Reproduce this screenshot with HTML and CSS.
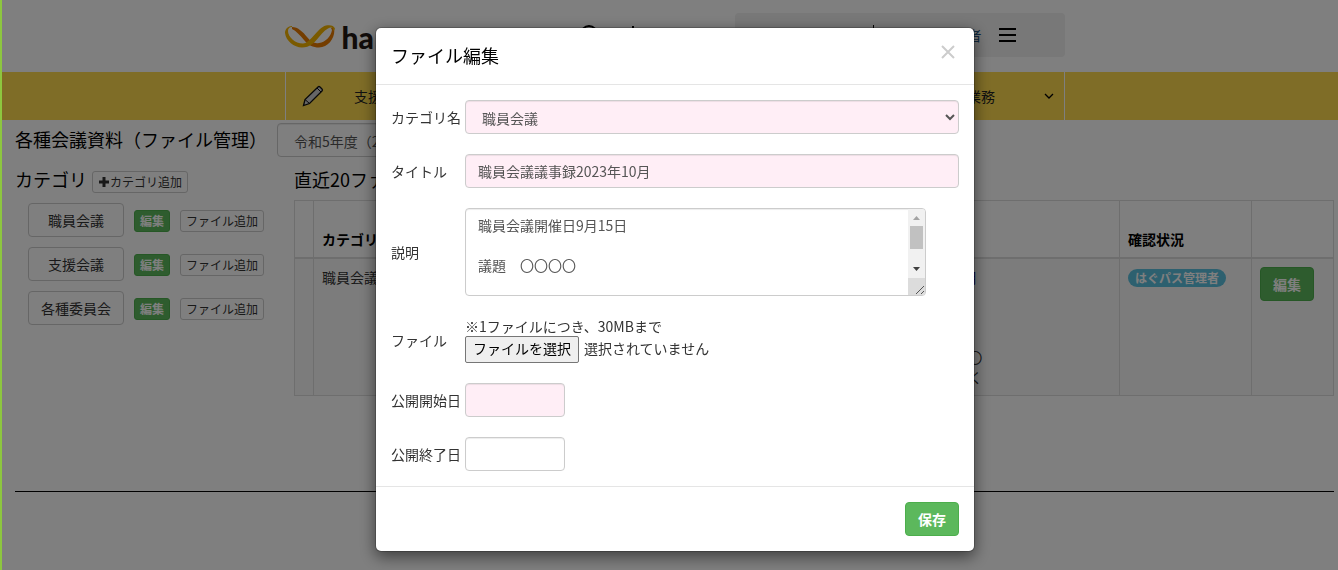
FILE: index.html
```html
<!DOCTYPE html>
<html lang="ja">
<head>
    <meta charset="UTF-8">
    <meta name="viewport" content="width=device-width, initial-scale=1.0">
    <title>各種会議資料（ファイル管理）</title>
    <link rel="stylesheet" href="styles.css">
</head>
<body>
    <header class="site-header">
        <div class="header-inner">
            <a href="#" class="logo">
                <svg width="50" height="24" viewBox="0 0 50 24" aria-hidden="true">
                    <path d="M7 2C13 2 18 7 22 12C26 17 30 19 34 18C41 17 46 11 47 5L46 3L49 2C51 12 44 22 34 22.500C28 22.500 23 20 19 15C15 10 11 6 7 4Z" fill="#e87a00"/>
                    <path d="M7 1C3 1 0 4 0 8C1 16 9 22.500 17 22.500C25 22.500 29 18 34 12C38 7 42 3 46 2.500C48 2.500 48 4 48 6L50 4C49 0 45 0 41 0.500C32 3 26 18 18 18.500C10 18.500 3 12 3 6C3 4 4 2 7 2Z" fill="#f5b400"/>
                </svg>
                <span>ha</span>
            </a>
            <div class="header-help">
                <svg width="60" height="20" viewBox="0 0 60 20" aria-hidden="true">
                    <circle cx="9" cy="9" r="8" fill="none" stroke="#000" stroke-width="2"/>
                    <path d="M53 1v14" stroke="#000" stroke-width="2"/>
                </svg>
            </div>
            <div class="user-box">
                <span class="user-divider"></span>
                <a href="#" class="user-name">管理者</a>
                <button type="button" class="menu-button" aria-label="メニュー"><span></span><span></span><span></span></button>
            </div>
        </div>
    </header>

    <nav class="navbar">
        <ul class="nav-list">
            <li>
                <a href="#">
                    <svg class="nav-icon" width="22" height="22" viewBox="0 0 22 22" aria-hidden="true">
                        <path d="M1.500 20.500L3 14.500L16 2Q17 1 18 2L20 4Q21 5 20 6L7.500 18.500Z" fill="#ccc" stroke="#111" stroke-width="1.300"/>
                        <path d="M3 14.500L7.500 18.500M15 3L19 7" stroke="#111"/>
                    </svg>
                    支援
                </a>
            </li>
            <li>
                <a href="#">
                    <span class="nav-icon"></span>
                    管理業務
                    <svg class="nav-arrow" width="10" height="6" viewBox="0 0 10 6" aria-hidden="true"><path d="M1 1l4 4 4-4" fill="none" stroke="#000" stroke-width="1.300"/></svg>
                </a>
            </li>
        </ul>
    </nav>

    <main class="page">
        <div class="title-row">
            <h1>各種会議資料（ファイル管理）</h1>
            <select class="form-control year-select" aria-label="年度">
                <option>令和5年度（2023年度）</option>
            </select>
        </div>

        <div class="columns">
            <section class="category-area">
                <div class="area-heading">
                    <h2>カテゴリ</h2>
                    <button type="button" class="btn btn-xs">
                        <svg width="12" height="12" viewBox="0 0 12 12" aria-hidden="true"><path d="M6 1v10M1 6h10" stroke="#333" stroke-width="3"/></svg>カテゴリ追加
                    </button>
                </div>
                <ul class="category-list">
                    <li>
                        <button type="button" class="btn category-name">職員会議</button>
                        <button type="button" class="btn btn-xs btn-success">編集</button>
                        <button type="button" class="btn btn-xs">ファイル追加</button>
                    </li>
                    <li>
                        <button type="button" class="btn category-name">支援会議</button>
                        <button type="button" class="btn btn-xs btn-success">編集</button>
                        <button type="button" class="btn btn-xs">ファイル追加</button>
                    </li>
                    <li>
                        <button type="button" class="btn category-name">各種委員会</button>
                        <button type="button" class="btn btn-xs btn-success">編集</button>
                        <button type="button" class="btn btn-xs">ファイル追加</button>
                    </li>
                </ul>
            </section>

            <section class="file-area">
                <div class="area-heading">
                    <h2>直近20ファイル</h2>
                </div>
                <table class="file-table">
                    <thead>
                        <tr>
                            <th class="col-mark"></th>
                            <th>カテゴリ</th>
                            <th class="col-detail"></th>
                            <th class="col-status">確認状況</th>
                            <th class="col-edit"></th>
                        </tr>
                    </thead>
                    <tbody>
                        <tr>
                            <td></td>
                            <td>職員会議</td>
                            <td>
                                <a href="#">職員会議議事録2023年10月</a>
                                <p class="detail-text">9月15日　議題　〇〇〇〇〇<br>9月15日　会議資料を詳しく</p>
                            </td>
                            <td><span class="badge">はぐパス管理者</span></td>
                            <td><button type="button" class="btn btn-success">編集</button></td>
                        </tr>
                    </tbody>
                </table>
            </section>
        </div>

        <hr>
    </main>

    <div class="modal-backdrop">
        <div class="modal" role="dialog" aria-modal="true" aria-labelledby="modal-title">
            <div class="modal-header">
                <h2 id="modal-title">ファイル編集</h2>
                <button type="button" class="close" aria-label="閉じる">
                    <svg width="14" height="14" viewBox="0 0 14 14" aria-hidden="true"><path d="M1 1l12 12M13 1L1 13" stroke="#ccc" stroke-width="2"/></svg>
                </button>
            </div>
            <form>
                <div class="modal-body">
                    <div class="form-row">
                        <label for="category">カテゴリ名</label>
                        <select id="category" class="form-control required">
                            <option>職員会議</option>
                        </select>
                    </div>
                    <div class="form-row">
                        <label for="title">タイトル</label>
                        <input type="text" id="title" class="form-control required" value="職員会議議事録2023年10月">
                    </div>
                    <div class="form-row">
                        <label for="description">説明</label>
                        <div class="textarea-wrap">
                            <textarea id="description" class="form-control">職員会議開催日9月15日

議題　〇〇〇〇


</textarea>
                            <svg class="scrollbar" width="17" height="86" viewBox="0 0 17 86" aria-hidden="true">
                                <path d="M0 0H14Q17 0 17 3V69H0Z" fill="#f1f1f1"/>
                                <path d="M5 11L8.500 7L12 11Z" fill="#a3a3a3"/>
                                <path d="M2 17H15V40H2Z" fill="#c1c1c1"/>
                                <path d="M5 58L8.500 62L12 58Z" fill="#404040"/>
                                <path d="M0 69H17V83Q17 86 14 86H0Z" fill="#dcdcdc"/>
                                <path d="M8 85L16 77M13 85L16 82" stroke="#555"/>
                            </svg>
                        </div>
                    </div>
                    <div class="form-row">
                        <label for="file">ファイル</label>
                        <div class="file-field">
                            <p>※1ファイルにつき、30MBまで</p>
                            <div class="file-picker">
                                <input type="file" id="file">
                                <label for="file" class="file-button">ファイルを選択</label>
                                <span>選択されていません</span>
                            </div>
                        </div>
                    </div>
                    <div class="form-row">
                        <label for="start-date">公開開始日</label>
                        <input type="text" id="start-date" class="form-control date required">
                    </div>
                    <div class="form-row">
                        <label for="end-date">公開終了日</label>
                        <input type="text" id="end-date" class="form-control date">
                    </div>
                </div>
                <div class="modal-footer">
                    <button type="submit" class="btn btn-success">保存</button>
                </div>
            </form>
        </div>
    </div>
</body>
</html>
```

FILE: styles.css
```css
* {
    box-sizing: border-box;
}

body {
    margin: 0;
    font-family: "Noto Sans CJK JP", sans-serif;
    font-size: 14px;
    line-height: 20px;
    color: #333;
    background: #fff;
    overflow: hidden;
}

/* green line on the left edge, stays above the backdrop */
body::before {
    content: "";
    position: fixed;
    top: 0;
    bottom: 0;
    left: 0;
    width: 2px;
    background: #8dc63f;
    z-index: 20;
}

h1, h2 {
    margin: 0;
    font-size: 18px;
    line-height: 26px;
    font-weight: 400;
    color: #000;
}

p {
    margin: 0;
}

ul {
    list-style: none;
    margin: 0;
    padding: 0;
}

a {
    color: #337ab7;
    text-decoration: none;
}

button, input, select, textarea {
    font-family: inherit;
    font-size: 14px;
    line-height: 20px;
}

/* header */
.site-header {
    padding-left: 11px;
}

.header-inner {
    display: flex;
    align-items: center;
    max-width: 780px;
    height: 70px;
    margin: 0 auto 2px;
}

.logo {
    display: flex;
    align-items: center;
    gap: 7px;
    width: 295px;
    height: 44px;
    padding-top: 4px;
    font-family: Lato, sans-serif;
    font-size: 30px;
    font-weight: 900;
    color: #231815;
}

.header-help {
    display: flex;
    flex: 1;
}

.user-box {
    display: flex;
    align-items: center;
    width: 330px;
    height: 44px;
    padding-right: 49px;
    background: #f0f0f0;
    border-radius: 4px;
    justify-content: flex-end;
}

.user-divider {
    width: 1px;
    height: 20px;
    margin-right: 66px;
    background: #000;
}

.user-name {
    color: #23527c;
}

.menu-button {
    display: flex;
    flex-direction: column;
    gap: 4px;
    width: 17px;
    margin-left: 17px;
    padding: 0;
    border: 0;
    background: none;
}

.menu-button span {
    height: 2px;
    background: #000;
}

/* navigation */
.navbar {
    padding-left: 12px;
    background: #ffdb4f;
}

.nav-list {
    display: flex;
    justify-content: space-between;
    max-width: 780px;
    height: 48px;
    margin: 0 auto;
    border-left: 1px solid #fff;
    border-right: 1px solid #fff;
}

.nav-list li {
    width: 193px;
}

.nav-list a {
    display: flex;
    align-items: center;
    height: 48px;
    padding: 0 10px 0 16px;
    color: #222;
}

.nav-icon {
    width: 22px;
    margin-right: 30px;
}

.nav-arrow {
    margin-left: auto;
}

/* page */
.page {
    padding: 3px 4px 0 15px;
}

.title-row {
    display: flex;
    align-items: flex-start;
    gap: 10px;
    margin-bottom: 9px;
}

.title-row h1 {
    padding-top: 3px;
}

.title-row .year-select {
    flex: none;
    width: 220px;
}

.columns {
    display: flex;
}

.category-area {
    flex: none;
    width: 279px;
}

.file-area {
    flex: 1;
}

.area-heading {
    display: flex;
    align-items: flex-start;
    gap: 5px;
    height: 27px;
}

.area-heading .btn {
    margin-top: 5px;
}

.category-list {
    display: flex;
    flex-direction: column;
    gap: 10px;
    padding: 10px 0 0 13px;
}

.category-list li {
    display: flex;
    align-items: flex-end;
    gap: 10px;
}

.category-list .btn-xs {
    margin-bottom: 5px;
}

.category-name {
    width: 96px;
}

.btn {
    height: 34px;
    padding: 6px 12px;
    border: 1px solid #ccc;
    border-radius: 4px;
    background: #fff;
    color: #333;
    white-space: nowrap;
}

.btn-xs {
    display: flex;
    align-items: center;
    height: 22px;
    padding: 1px 5px;
    border-radius: 3px;
    font-size: 12px;
    line-height: 18px;
}

.btn-success {
    border-color: #4cae4c;
    background: #5cb85c;
    color: #fff;
    font-weight: 700;
}

.file-table {
    width: 100%;
    margin-top: 7px;
    border-collapse: collapse;
    table-layout: fixed;
}

.file-table th,
.file-table td {
    padding: 8px;
    border: 1px solid #ddd;
    text-align: left;
    vertical-align: top;
}

.file-table th {
    height: 57px;
    border-bottom-width: 2px;
    vertical-align: bottom;
    color: #000;
}

.file-table td {
    height: 137px;
    background: #f9f9f9;
}

.file-table td a {
    color: #000080;
}

.col-mark {
    width: 19px;
}

.col-detail {
    width: 323px;
}

.col-status {
    width: 132px;
}

.col-edit {
    width: 82px;
}

.detail-text {
    padding-top: 60px;
}

.badge {
    display: inline-block;
    padding: 3px 7px;
    border-radius: 10px;
    background: #5bc0de;
    color: #fff;
    font-size: 12px;
    font-weight: 700;
    line-height: 12px;
}

hr {
    margin: 95px 0 0;
    border: 0;
    border-top: 1px solid #000;
}

/* modal */
.modal-backdrop {
    position: fixed;
    inset: 0;
    z-index: 10;
    display: flex;
    align-items: flex-start;
    justify-content: center;
    padding: 27px 0 0 12px;
    background: rgba(0, 0, 0, 0.5);
}

.modal {
    width: 100%;
    max-width: 600px;
    border: 1px solid rgba(0, 0, 0, 0.2);
    border-radius: 6px;
    background: #fff;
    background-clip: padding-box;
    box-shadow: 0 5px 15px rgba(0, 0, 0, 0.5);
}

.modal-header {
    display: flex;
    align-items: center;
    justify-content: space-between;
    padding: 14px 15px 16px;
    border-bottom: 1px solid #e5e5e5;
}

.close {
    display: flex;
    padding: 0 4px 6px;
    border: 0;
    background: none;
}

.modal-body {
    display: flex;
    flex-direction: column;
    gap: 20px;
    padding: 15px;
}

.form-row {
    display: flex;
    align-items: center;
}

.form-row > label {
    flex: none;
    width: 74px;
}

.form-control {
    width: 100%;
    height: 34px;
    padding: 6px 12px;
    border: 1px solid #ccc;
    border-radius: 4px;
    background: #fff;
    box-shadow: inset 0 1px 1px rgba(0, 0, 0, 0.075);
    color: #555;
}

.form-control.required {
    background: #ffeef6;
}

.form-control.date {
    width: 100px;
}

.textarea-wrap {
    position: relative;
    width: 461px;
}

.textarea-wrap textarea {
    display: block;
    height: 88px;
    padding-right: 29px;
    resize: none;
}

.scrollbar {
    position: absolute;
    top: 1px;
    right: 1px;
    pointer-events: none;
}

.file-picker {
    display: flex;
    align-items: flex-start;
    gap: 5px;
}

.file-picker span {
    padding-top: 2px;
}

.file-picker input {
    position: absolute;
    width: 1px;
    height: 1px;
    opacity: 0;
}

.file-button {
    height: 27px;
    padding: 1px 7px;
    border: 1px solid #767676;
    border-radius: 2px;
    background: #efefef;
    color: #000;
}

.modal-footer {
    display: flex;
    justify-content: flex-end;
    padding: 15px;
    border-top: 1px solid #e5e5e5;
}
```
